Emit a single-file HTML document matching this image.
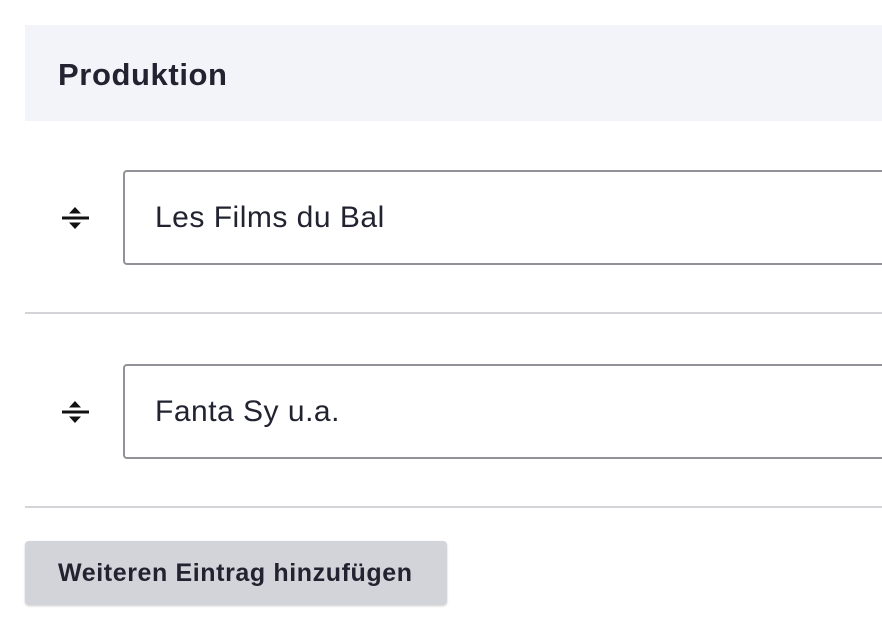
<!DOCTYPE html>
<html><head><meta charset="utf-8"><style>
*{margin:0;padding:0;box-sizing:border-box}
body{width:882px;height:632px;background:#fff;font-family:"Liberation Sans",Arial,sans-serif;color:#222330;position:relative;overflow:hidden}
.hdr{position:absolute;left:25px;top:25px;width:870px;height:96px;background:#f3f4f9}
.hdr span{position:absolute;left:33px;top:32px;font-size:31px;font-weight:bold;letter-spacing:0.6px}
.inp{position:absolute;left:123px;width:780px;height:95px;border:2px solid #919297;border-radius:4px;background:#fff}
.inp span{position:absolute;left:30px;top:29px;font-size:30px;letter-spacing:0.5px}
.line{position:absolute;left:25px;width:870px;height:2px;background:#d4d4d9}
.ic{position:absolute;left:60px}
.btn{position:absolute;left:25px;top:541px;width:422px;height:64px;background:#d3d4d9;border-radius:4px;box-shadow:0 1px 2px rgba(0,0,0,.2)}
.btn span{position:absolute;left:33px;top:18px;font-size:25px;font-weight:bold;letter-spacing:0.6px}
</style></head><body>
<div class="hdr"><span>Produktion</span></div>
<svg class="ic" style="top:203px" width="30" height="30" viewBox="0 0 30 30"><path d="M15 4 L21 10.5 H9 Z" fill="#111"/><rect x="2" y="13.5" width="27" height="3" fill="#111"/><path d="M15 26 L21 19.5 H9 Z" fill="#111"/></svg>
<div class="inp" style="top:170px"><span>Les Films du Bal</span></div>
<div class="line" style="top:312px"></div>
<svg class="ic" style="top:397px" width="30" height="30" viewBox="0 0 30 30"><path d="M15 4 L21 10.5 H9 Z" fill="#111"/><rect x="2" y="13.5" width="27" height="3" fill="#111"/><path d="M15 26 L21 19.5 H9 Z" fill="#111"/></svg>
<div class="inp" style="top:364px"><span>Fanta Sy u.a.</span></div>
<div class="line" style="top:506px"></div>
<div class="btn"><span>Weiteren Eintrag hinzufügen</span></div>
</body></html>
